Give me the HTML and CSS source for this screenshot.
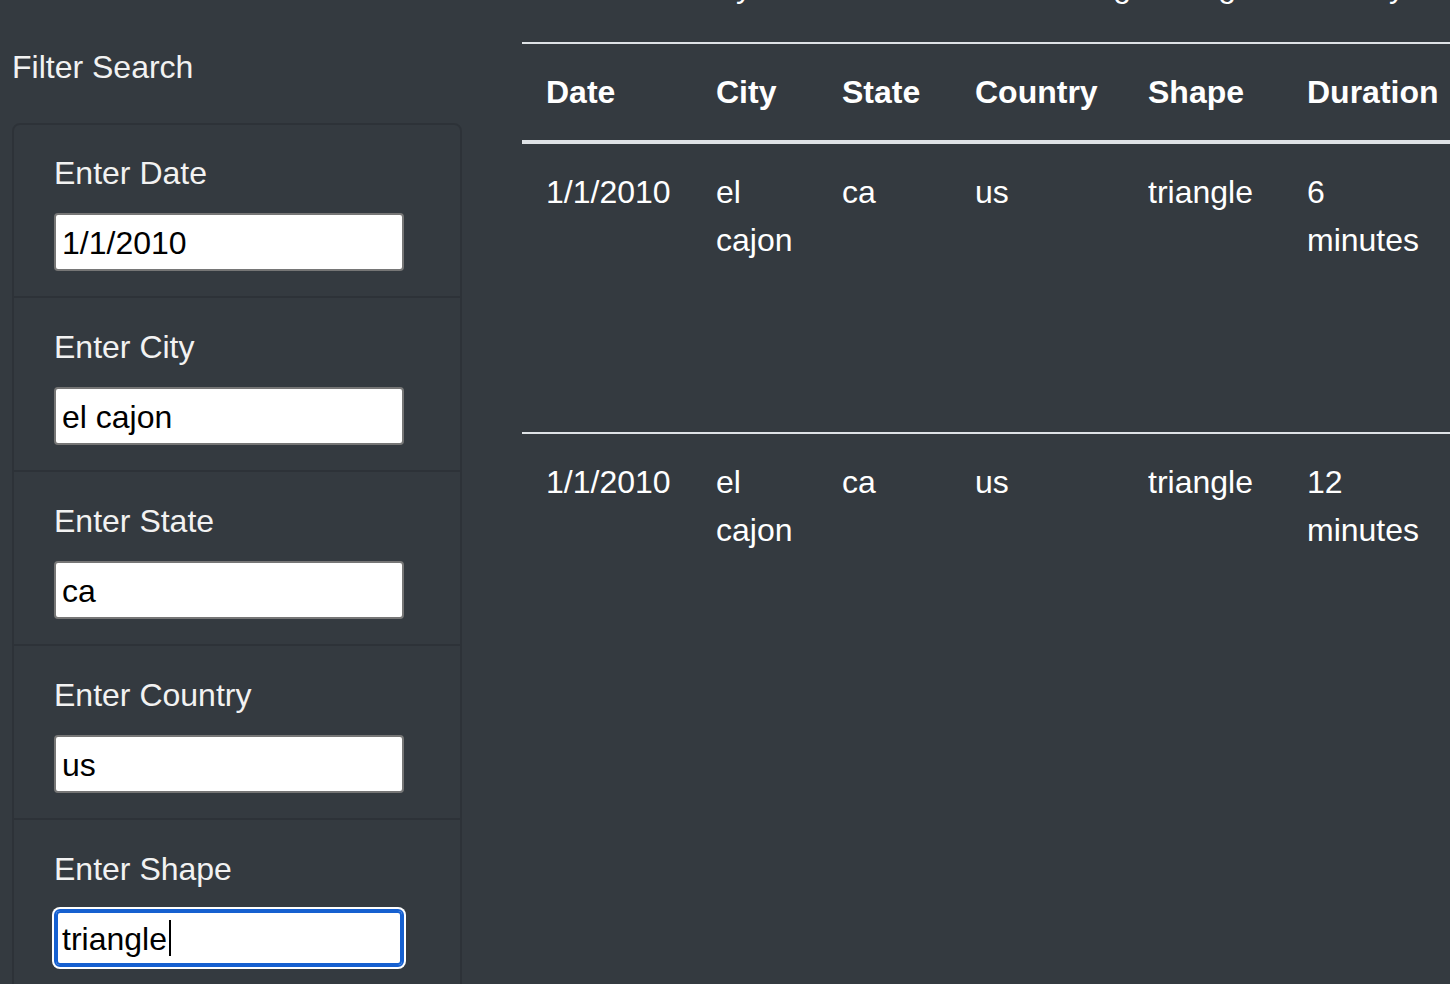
FILE: index.html
```html
<!DOCTYPE html>
<html lang="en">
<head>
<meta charset="utf-8">
<title>UFO Sightings</title>
<link rel="stylesheet" href="styles.css">
</head>
<body>
<div class="intro">
  <p class="intro-line"><span class="seg s1">Filter the UFO data by</span><span class="seg s2">date and time or setting</span><span class="seg s3">along</span><span class="seg s4">the country</span></p>
</div>
<main class="layout">
  <aside class="sidebar">
    <div class="side-title">Filter Search</div>
    <ul class="filters">
      <li class="filter-item">
        <label class="filter-label" for="datetime">Enter Date</label>
        <input class="filter-input" id="datetime" type="text" value="1/1/2010">
      </li>
      <li class="filter-item">
        <label class="filter-label" for="city">Enter City</label>
        <input class="filter-input" id="city" type="text" value="el cajon">
      </li>
      <li class="filter-item">
        <label class="filter-label" for="state">Enter State</label>
        <input class="filter-input" id="state" type="text" value="ca">
      </li>
      <li class="filter-item">
        <label class="filter-label" for="country">Enter Country</label>
        <input class="filter-input" id="country" type="text" value="us">
      </li>
      <li class="filter-item">
        <label class="filter-label" for="shape">Enter Shape</label>
        <div class="input-wrap">
          <input class="filter-input is-focused" id="shape" type="text" value="triangle">
          <span class="caret"></span>
        </div>
      </li>
    </ul>
  </aside>
  <section class="results">
    <table class="ufo-table">
      <colgroup>
        <col class="c-date"><col class="c-city"><col class="c-state"><col class="c-country"><col class="c-shape"><col class="c-duration"><col class="c-comments">
      </colgroup>
      <thead>
        <tr>
          <th>Date</th><th>City</th><th>State</th><th>Country</th><th>Shape</th><th>Duration</th><th>Comments</th>
        </tr>
      </thead>
      <tbody>
        <tr>
          <td class="nowrap">1/1/2010</td><td>el cajon</td><td>ca</td><td>us</td><td>triangle</td><td>6 minutes</td><td>Bright triangle shaped craft hovered silently over the valley then shot away</td>
        </tr>
        <tr>
          <td class="nowrap">1/1/2010</td><td>el cajon</td><td>ca</td><td>us</td><td>triangle</td><td>12 minutes</td><td>Three lights in a row</td>
        </tr>
      </tbody>
    </table>
  </section>
</main>
</body>
</html>
```
FILE: styles.css
```css
html, body {
  overflow: hidden;
}
body {
  margin: 0;
  background: #343a40;
  color: #ffffff;
  font-family: "Liberation Sans", Arial, Helvetica, sans-serif;
  font-size: 32px;
  line-height: 1.5;
}

/* scrolled-off heading: only descenders are visible */
.intro {
  height: 42px;
  overflow: hidden;
}
.intro-line {
  margin: -38px 0 0;
  display: flex;
  white-space: pre;
  color: #ffffff;
}
.seg {
  display: block;
  flex: none;
  text-align: right;
}
.s1 { width: 752px; }
.s2 { width: 379px; }
.s3 { width: 105px; }
.s4 { width: 169px; }

.layout {
  display: flex;
  align-items: flex-start;
  padding-left: 12px;
}

.sidebar {
  flex: none;
  width: 450px;
}
.side-title {
  padding-top: 1px;
  margin-bottom: 32px;
  color: #f2f2f2;
}
.filters {
  list-style: none;
  margin: 0;
  padding: 0;
  border: 2px solid rgba(0, 0, 0, 0.125);
  border-radius: 8px;
}
.filter-item {
  padding: 25px 40px 25px;
  border-top: 2px solid rgba(0, 0, 0, 0.125);
}
.filter-item:first-child {
  padding-top: 24px;
  border-top: 0;
}
.filter-label {
  display: block;
  margin-bottom: 16px;
  color: #f2f2f2;
}
.input-wrap {
  position: relative;
  width: 350px;
}
.filter-input {
  display: block;
  box-sizing: border-box;
  width: 350px;
  height: 58px;
  margin: 0;
  padding: 2px 6px 0;
  border: 2px solid #767676;
  border-radius: 4px;
  background: #ffffff;
  color: #000000;
  font-family: "Liberation Sans", Arial, Helvetica, sans-serif;
  font-size: 32px;
  outline: none;
}
.filter-input.is-focused {
  border-color: #1660d0;
  border-radius: 6px;
  box-shadow: inset 0 0 0 2px #1660d0, 0 0 0 2px #ffffff;
}
.caret {
  position: absolute;
  left: 115px;
  top: 11px;
  width: 2px;
  height: 36px;
  background: #000000;
}

.results {
  flex: none;
  margin-left: 60px;
}
.ufo-table {
  table-layout: fixed;
  width: 1243px;
  border-collapse: separate;
  border-spacing: 0;
  color: #ffffff;
}
.c-date { width: 170px; }
.c-city { width: 126px; }
.c-state { width: 133px; }
.c-country { width: 173px; }
.c-shape { width: 159px; }
.c-duration { width: 182px; }
.c-comments { width: 300px; }

.ufo-table th {
  padding: 24px;
  text-align: left;
  vertical-align: bottom;
  font-weight: 700;
  border-top: 2px solid #dee2e6;
  border-bottom: 4px solid #dee2e6;
}
.ufo-table td {
  padding: 24px;
  vertical-align: top;
  border-top: 2px solid #dee2e6;
}
.ufo-table tbody tr:first-child td {
  border-top: 0;
}
.nowrap {
  white-space: nowrap;
}
```
